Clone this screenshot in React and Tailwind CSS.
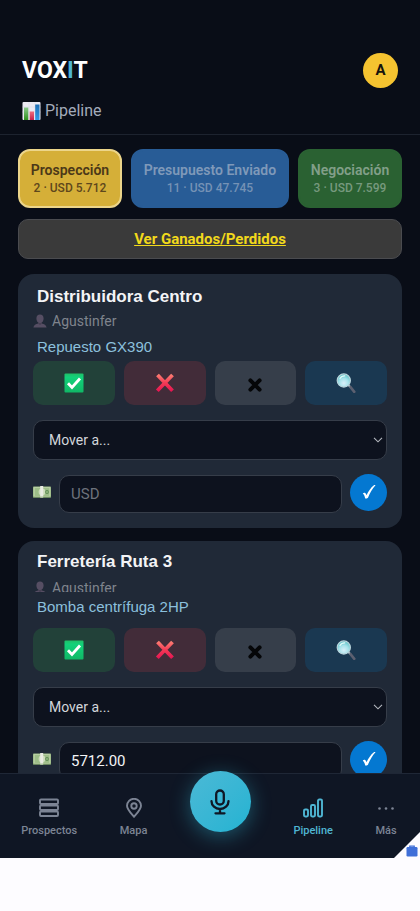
import { useState } from 'react';

const stages = [
    { name: 'Prospección', summary: '2 · USD 5.712', style: 'bg-[#d5af38] border-[#ecd58a] text-[#4b3818]', sub: 'text-[#5e471c]' },
    { name: 'Presupuesto Enviado', summary: '11 · USD 47.745', style: 'bg-[#285c96] border-[#285c96] text-[#7f99b9]', sub: 'text-[#7592b5]' },
    { name: 'Negociación', summary: '3 · USD 7.599', style: 'bg-[#2a6132] border-[#2a6132] text-[#829f89]', sub: 'text-[#77997e]' },
];

const deals = [
    { id: 'd1', company: 'Distribuidora Centro', owner: 'Agustinfer', product: 'Repuesto GX390', amount: '', compact: false },
    { id: 'd2', company: 'Ferretería Ruta 3', owner: 'Agustinfer', product: 'Bomba centrífuga 2HP', amount: '5712.00', compact: true },
];

function ChartIcon() {
    return (
        <svg viewBox="0 0 20 20" className="size-5" aria-hidden="true">
            <defs>
                <linearGradient id="barGreen" x1="0" y1="0" x2="0" y2="1">
                    <stop offset="0" stopColor="#8bc98a" />
                    <stop offset="1" stopColor="#2e8f1c" />
                </linearGradient>
                <linearGradient id="barRed" x1="0" y1="0" x2="0" y2="1">
                    <stop offset="0" stopColor="#ef6d7d" />
                    <stop offset="1" stopColor="#c4204a" />
                </linearGradient>
                <linearGradient id="barBlue" x1="0" y1="0" x2="0" y2="1">
                    <stop offset="0" stopColor="#1f6fb5" />
                    <stop offset="1" stopColor="#2f9be8" />
                </linearGradient>
            </defs>
            <rect x=".5" y="1" width="18" height="18" rx="1" fill="#eceaf3" />
            <path d="M.5 6h18M.5 11h18M7 1v18M13 1v18" stroke="#d5d4e2" strokeWidth=".5" />
            <rect x="2" y="6.500" width="4.300" height="12.500" fill="url(#barGreen)" />
            <rect x="7.700" y="10.500" width="4.300" height="8.500" fill="url(#barRed)" />
            <rect x="13.200" y="3.500" width="4.300" height="15.500" fill="url(#barBlue)" />
        </svg>
    );
}

function PersonIcon({ className }) {
    return (
        <svg viewBox="0 0 14 14" className={className} aria-hidden="true">
            <path d="M7 .5c2.200 0 3.600 1.600 3.600 3.900 0 1.800-.8 3.400-1.900 4.100v1c2.600.4 4.500 1.500 4.900 4H.4c.4-2.500 2.300-3.600 4.900-4v-1C4.200 7.800 3.400 6.200 3.400 4.400 3.400 2.100 4.800.5 7 .5z" fill="#564e63" />
            <path d="M5.300 8.500c1 .7 2.400.7 3.400 0v1.200L7 11 5.300 9.700z" fill="#453f52" />
        </svg>
    );
}

function CheckBoxIcon() {
    return (
        <svg viewBox="0 0 20 20" className="size-5" aria-hidden="true">
            <defs>
                <linearGradient id="okFill" x1="0" y1="0" x2="0" y2="1">
                    <stop offset="0" stopColor="#20bf67" />
                    <stop offset=".2" stopColor="#12d27a" />
                    <stop offset="1" stopColor="#10b866" />
                </linearGradient>
            </defs>
            <rect x=".5" y=".5" width="19" height="19" rx="1" fill="url(#okFill)" />
            <path d="M4 10.200l4 4.300 8-9" fill="none" stroke="#fff" strokeWidth="2.800" />
        </svg>
    );
}

function CrossIcon() {
    return (
        <svg viewBox="0 0 20 20" className="size-5" aria-hidden="true">
            <defs>
                <linearGradient id="noFill" gradientUnits="userSpaceOnUse" x1="0" y1="0" x2="0" y2="20">
                    <stop offset="0" stopColor="#ff8a78" />
                    <stop offset=".5" stopColor="#f43a55" />
                    <stop offset="1" stopColor="#e20d51" />
                </linearGradient>
            </defs>
            <path d="M2.500 2L17.500 17.800M17.500 2L2.300 17.800" fill="none" stroke="url(#noFill)" strokeWidth="3.800" />
        </svg>
    );
}

function DiscardIcon() {
    return (
        <svg viewBox="0 0 14 14" className="mt-1 size-3.5" aria-hidden="true">
            <path d="M2.400 2.400l9.200 9.200M11.600 2.400l-9.200 9.200" fill="none" stroke="#050608" strokeWidth="4" strokeLinecap="round" />
        </svg>
    );
}

function SearchIcon() {
    return (
        <svg viewBox="0 0 20 20" className="size-5" aria-hidden="true">
            <defs>
                <radialGradient id="lens" cx=".5" cy=".7" r=".65">
                    <stop offset="0" stopColor="#d9eff9" />
                    <stop offset=".55" stopColor="#a5e2ea" />
                    <stop offset="1" stopColor="#5fc4c8" />
                </radialGradient>
            </defs>
            <path d="M12.500 12l2 2.300" stroke="#a7b3bd" strokeWidth="2" />
            <path d="M14.500 14.200l3.800 4.600" stroke="#5c6070" strokeWidth="2.600" strokeLinecap="round" />
            <circle cx="7.800" cy="7.500" r="6.600" fill="url(#lens)" stroke="#b9d3db" strokeWidth="1.200" />
            <path d="M4 5.500C5 3.600 6.800 2.700 8.800 2.800" fill="none" stroke="#e4fbfa" strokeWidth="1.200" strokeLinecap="round" />
        </svg>
    );
}

function MoneyIcon() {
    return (
        <svg viewBox="0 0 18 12" className="h-3 w-[18px] shrink-0" aria-hidden="true">
            <rect x="0" y=".5" width="18" height="11" rx=".8" fill="#9dbd88" />
            <rect x="1.200" y="1.700" width="15.600" height="8.600" fill="none" stroke="#c6d8b0" strokeWidth=".7" />
            <circle cx="9" cy="6" r="3.400" fill="#cddcbc" />
            <circle cx="14" cy="6" r="1.900" fill="#5f8b53" />
            <circle cx="14" cy="6" r=".8" fill="#b8d7a2" />
            <rect x="7.200" y="0" width="3" height="12" fill="#e9ebe2" />
            <path d="M0 11.200h18" stroke="#71945f" strokeWidth=".8" />
        </svg>
    );
}

function TickIcon() {
    return (
        <svg viewBox="0 0 16 16" className="size-4" aria-hidden="true">
            <path d="M1.800 9.400c1.200-1.200 2.500-1 3.200.7l.5 1.200C7.500 7 9.800 3.500 12.600 1.400c.6-.4 1.300-.4 1.900-.2-3.200 3.400-5.600 7.600-7.500 12.500-.8.7-1.800 1-2.800.9-.3-2-1-3.900-2.400-5.200z" fill="#fff" />
        </svg>
    );
}

function DealCard({ deal }) {
    const [amount, setAmount] = useState(deal.amount);

    return (
        <article className={`rounded-2xl bg-[#202937] px-[15px] pb-[15px] ${deal.compact ? 'pt-2.5' : 'pt-3'}`}>
            <h2 className="px-1 font-['Liberation_Sans',sans-serif] text-[17px] leading-[21px] font-bold text-[#f3f4f6]">{deal.company}</h2>

            {/* Owner row is cut short on compact cards */}
            <div className={deal.compact ? 'mt-1.5 h-3.5 overflow-hidden' : 'mt-1 h-5'}>
                <p className="flex items-center gap-[5px] text-sm leading-5 text-[#7f848d]">
                    <PersonIcon className="size-3.5 shrink-0" />
                    {deal.owner}
                </p>
            </div>
            <p className={`px-1 font-['Liberation_Sans',sans-serif] text-[15px] leading-5 text-[#8cc0dd] ${deal.compact ? 'mt-[5px]' : 'mt-1.5'}`}>{deal.product}</p>

            <div className={`grid grid-cols-4 gap-[9px] ${deal.compact ? 'mt-[11px]' : 'mt-1'}`}>
                <button aria-label="Ganado" className="flex h-11 items-center justify-center rounded-[10px] bg-[#224139]"><CheckBoxIcon /></button>
                <button aria-label="Perdido" className="flex h-11 items-center justify-center rounded-[10px] bg-[#422c39]"><CrossIcon /></button>
                <button aria-label="Descartar" className="flex h-11 items-center justify-center rounded-[10px] bg-[#363e4a]"><DiscardIcon /></button>
                <button aria-label="Ver detalle" className="flex h-11 items-center justify-center rounded-[10px] bg-[#1a3851]"><SearchIcon /></button>
            </div>

            <div className="relative mt-[15px]">
                <select
                    aria-label="Mover a"
                    className="block h-10 w-full appearance-none rounded-[10px] border border-[#363d49] bg-[#0d121e] px-[15px] text-sm text-[#d3d6db]"
                >
                    <option>Mover a...</option>
                    {stages.map((stage) => (
                        <option key={stage.name}>{stage.name}</option>
                    ))}
                </select>
                <svg viewBox="0 0 10 6" className="pointer-events-none absolute top-[17px] right-1 h-1.5 w-2.5" aria-hidden="true">
                    <path d="M1 .8l4 4 4-4" fill="none" stroke="#b4b8bf" strokeWidth="1.100" />
                </svg>
            </div>

            <div className="mt-[11px] flex items-center gap-2">
                <MoneyIcon />
                <input
                    aria-label="Monto en USD"
                    placeholder="USD"
                    value={amount}
                    onChange={(e) => setAmount(e.target.value)}
                    className="mt-1 h-[38px] min-w-0 flex-1 rounded-[10px] border border-[#363d49] bg-[#0d121e] px-[11px] text-[15px] text-[#f3f4f6] placeholder:text-[#6d727c]"
                />
                <button aria-label="Guardar monto" className="flex size-[37px] shrink-0 items-center justify-center rounded-full bg-[#0478d1]">
                    <TickIcon />
                </button>
            </div>
        </article>
    );
}

function NavItem({ label, active, children }) {
    return (
        <a href="#" className={`flex flex-col items-center gap-[5px] text-[11px] leading-4 font-medium ${active ? 'text-[#4fb5d3]' : 'text-[#7c8494]'}`}>
            <svg viewBox="0 0 20 20" className="size-5" fill="none" stroke="currentColor" strokeWidth="1.900" strokeLinejoin="round" aria-hidden="true">
                {children}
            </svg>
            {label}
        </a>
    );
}

export default function App() {
    return (
        <div className="flex h-screen flex-col overflow-hidden bg-[#090d17] font-[Roboto,sans-serif]">
            {/* Header */}
            <header className="shrink-0 border-b border-[#1d232f] px-[22px] pt-[53px] pb-3">
                <div className="flex items-center justify-between">
                    <span className="text-[23px] leading-7 font-bold text-white">
                        VOX<span className="text-[#4fb5d3]">I</span>T
                    </span>
                    <button aria-label="Cuenta" className="size-[35px] rounded-full bg-[#f5c330] text-[15px] font-bold text-[#15130d]">A</button>
                </div>
                <h1 className="mt-3 flex items-center gap-[3px] text-base leading-[22px] text-[#a3abba]">
                    <ChartIcon />
                    Pipeline
                </h1>
            </header>

            {/* Deals */}
            <main className="min-h-0 flex-1 overflow-hidden px-[18px] pt-3.5">
                <div className="flex gap-[9px]">
                    {stages.map((stage) => (
                        <button key={stage.name} className={`flex h-[59px] flex-auto flex-col items-center justify-center rounded-xl border-2 whitespace-nowrap ${stage.style}`}>
                            <span className="text-sm leading-[18px] font-semibold">{stage.name}</span>
                            <span className={`text-xs leading-[18px] font-medium ${stage.sub}`}>{stage.summary}</span>
                        </button>
                    ))}
                </div>

                <a
                    href="#"
                    className="mt-[11px] flex h-10 items-center justify-center rounded-[10px] border border-[#4a4b4f] bg-[#3a3a3a] text-[15px] font-bold text-[#f2d91c] underline"
                >
                    Ver Ganados/Perdidos
                </a>

                <div className="mt-[15px] flex flex-col gap-[13px]">
                    {deals.map((deal) => (
                        <DealCard key={deal.id} deal={deal} />
                    ))}
                </div>
            </main>

            {/* Bottom nav */}
            <nav className="relative flex h-[85px] shrink-0 items-start justify-around border-t border-[#1f2736] bg-[#0f1624] pt-6 pr-0.5">
                <NavItem label="Prospectos">
                    <rect x="1" y="1.500" width="18" height="4.500" rx="1" />
                    <rect x="1" y="7.500" width="18" height="4.500" rx="1" />
                    <rect x="1" y="13.500" width="18" height="4.500" rx="1" />
                </NavItem>
                <NavItem label="Mapa">
                    <path d="M10 18.800c-3.500-4-7-7.500-7-11a7 7 0 0 1 14 0c0 3.500-3.500 7-7 11z" />
                    <circle cx="10" cy="8" r="2.700" />
                </NavItem>
                <button
                    aria-label="Dictar"
                    className="-mt-[27px] flex size-[61px] items-center justify-center rounded-full bg-linear-to-br from-[#4ab9d6] to-[#22b3d2] shadow-[0_4px_20px_rgba(50,184,214,0.4)]"
                >
                    <svg viewBox="0 0 20 26" className="h-[26px] w-5" fill="none" stroke="#0f1724" strokeWidth="2.300" strokeLinecap="round" aria-hidden="true">
                        <rect x="6.200" y="1.500" width="7.600" height="14" rx="3.800" />
                        <path d="M1.500 12.200a8.500 7.800 0 0 0 17 0M10 20v4M5.500 24.300h9" />
                    </svg>
                </button>
                <NavItem label="Pipeline" active>
                    <rect x="1" y="11.500" width="4" height="7" rx="1.200" />
                    <rect x="8" y="7" width="4" height="11.500" rx="1.200" />
                    <rect x="15" y="1.500" width="4" height="17" rx="1.200" />
                </NavItem>
                <NavItem label="Más">
                    <g fill="currentColor" stroke="none">
                        <circle cx="3.500" cy="10.500" r="1.300" />
                        <circle cx="10" cy="10.500" r="1.300" />
                        <circle cx="16.500" cy="10.500" r="1.300" />
                    </g>
                </NavItem>

                {/* Folded corner with the work profile badge */}
                <svg viewBox="0 0 26 26" className="absolute right-0 bottom-0 size-[26px]" aria-hidden="true">
                    <path d="M26 0v26H0z" fill="#fdfcff" />
                    <path d="M15.800 15.500v-1.400h4.400v1.400" fill="none" stroke="#3f6fd8" strokeWidth="1.300" />
                    <rect x="12.500" y="15" width="11" height="9.500" rx="1.200" fill="#3f6fd8" />
                </svg>
            </nav>

            <div className="h-[53px] shrink-0 bg-[#fdfcff]" />
        </div>
    );
}
